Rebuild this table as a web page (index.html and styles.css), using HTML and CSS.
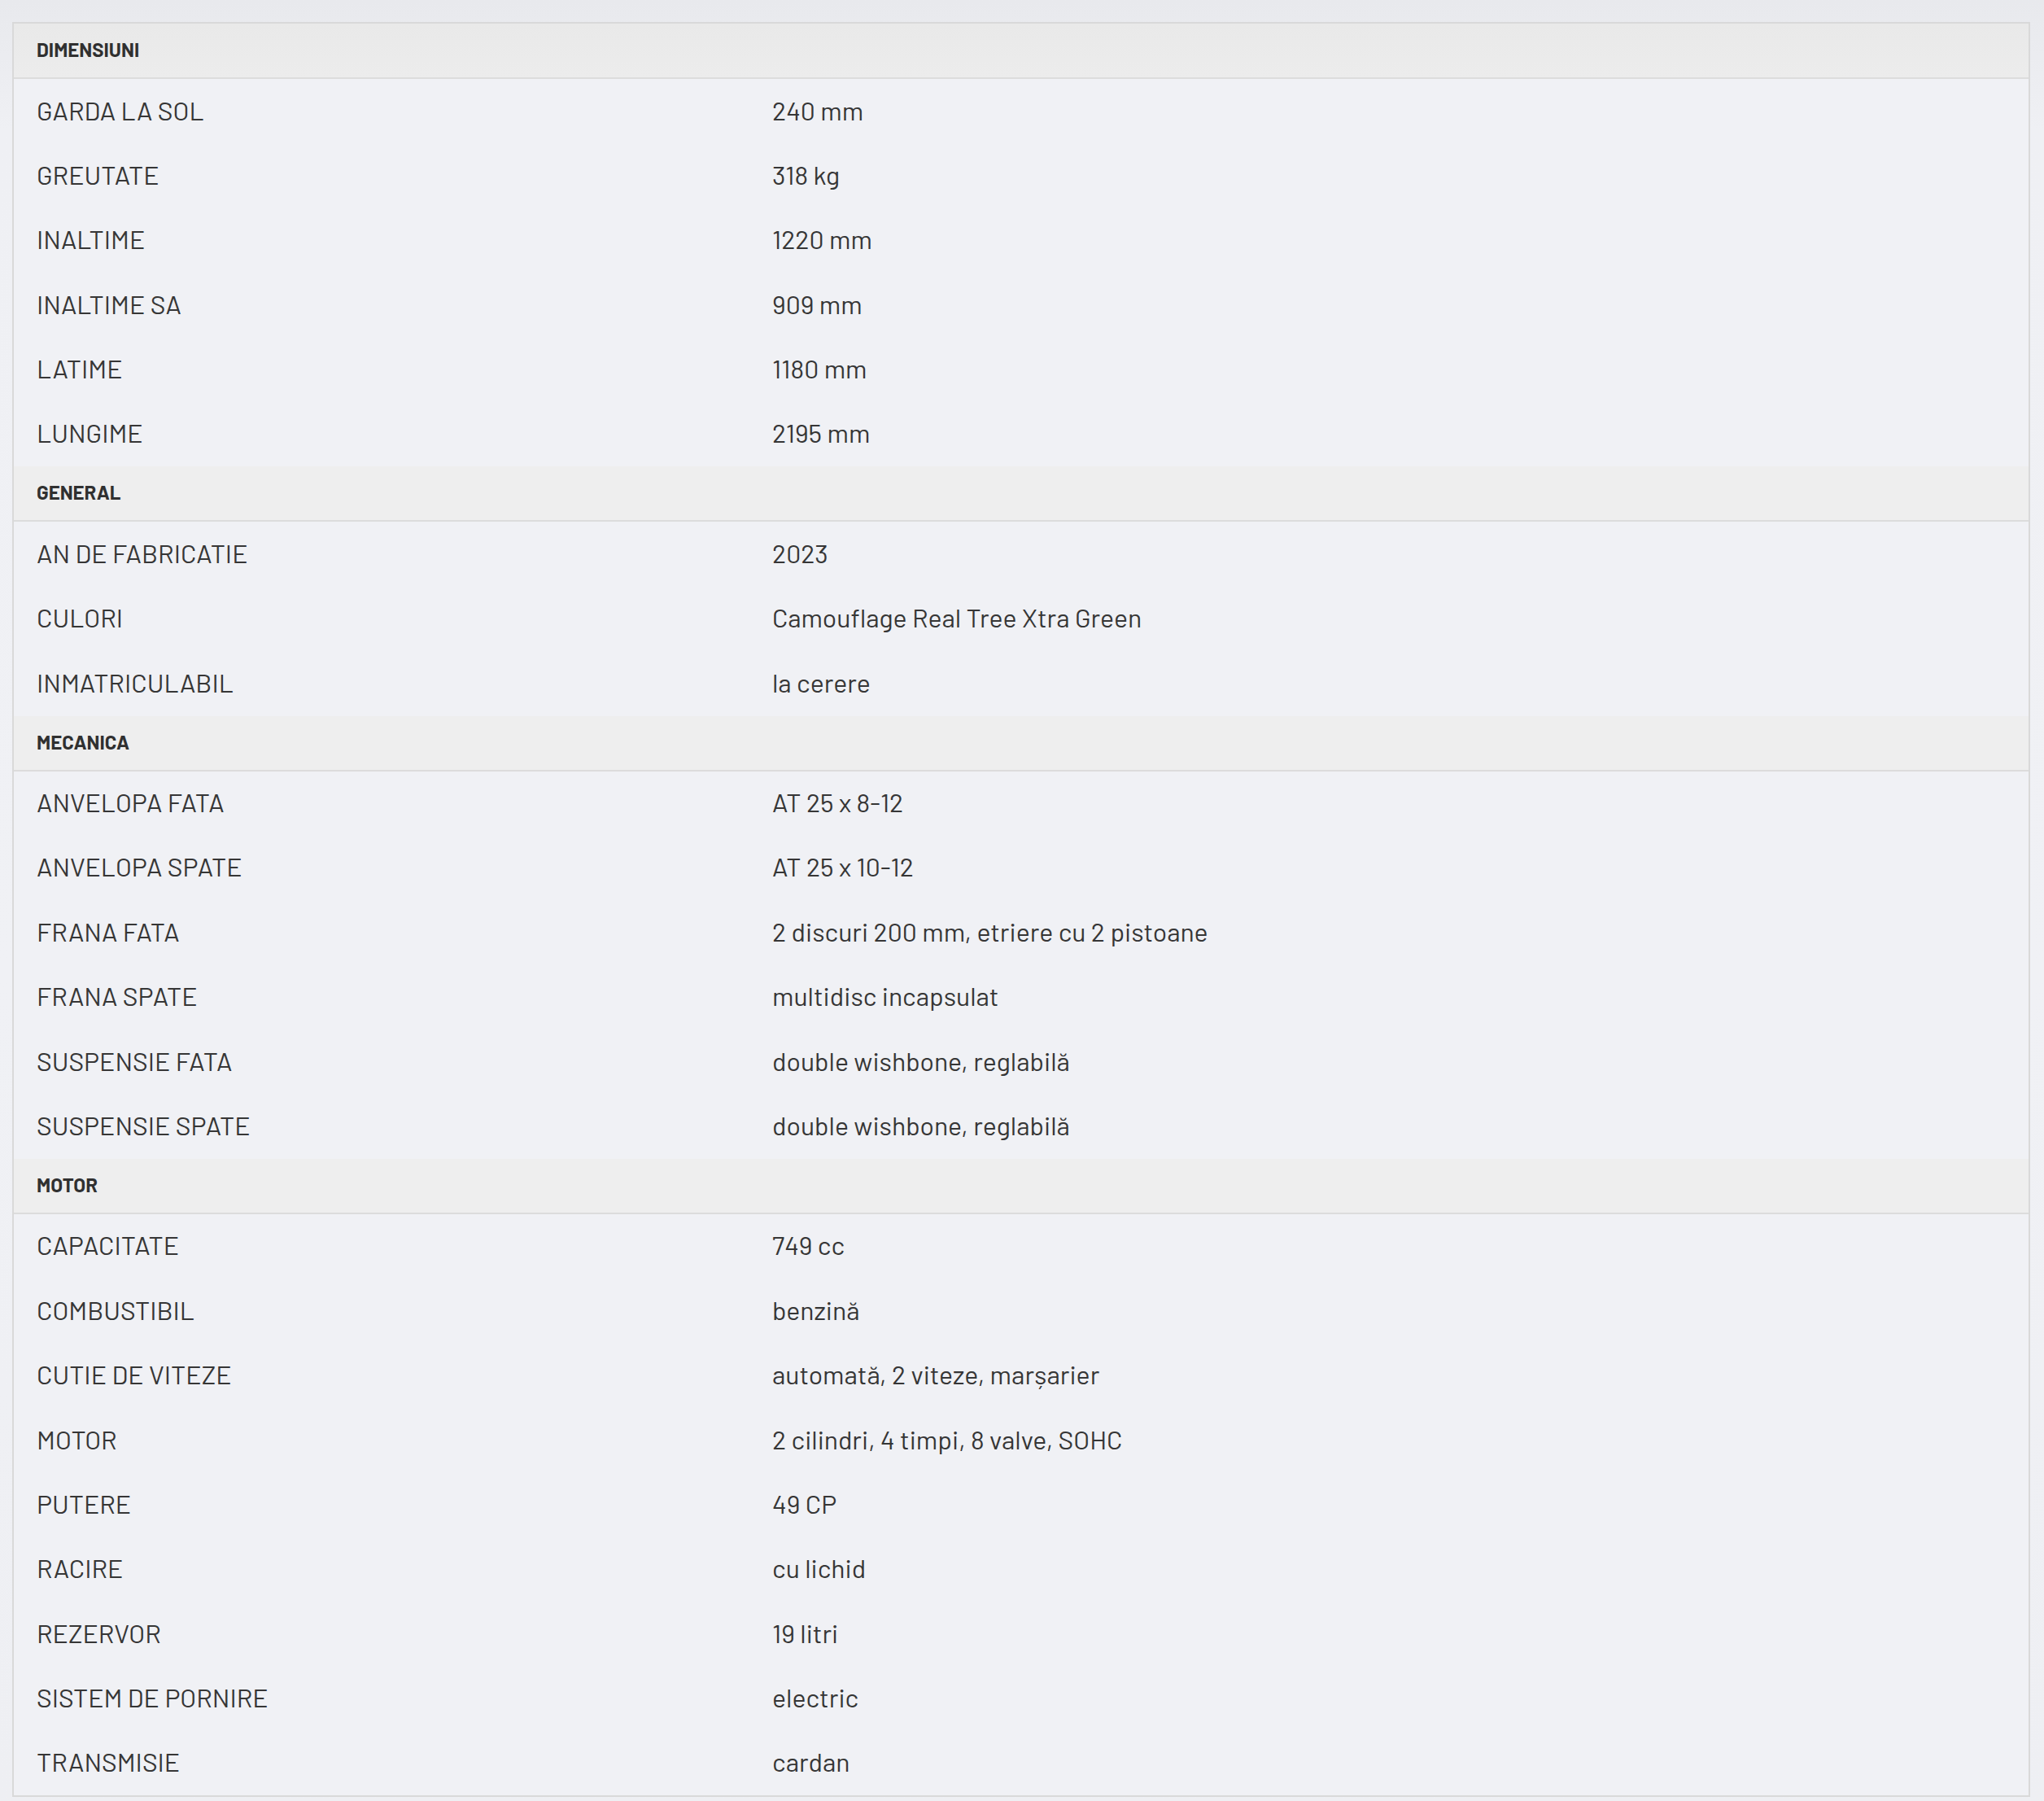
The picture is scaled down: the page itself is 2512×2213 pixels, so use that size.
FILE: index.html
```html
<!DOCTYPE html>
<html lang="ro">
<head>
<meta charset="utf-8">
<title>Specificatii</title>
<link rel="stylesheet" href="styles.css">
</head>
<body>
<div class="page">
  <div class="specs">
    <div class="group-head first">DIMENSIUNI</div>
    <div class="row"><div class="label">GARDA LA SOL</div><div class="value">240 mm</div></div>
    <div class="row"><div class="label">GREUTATE</div><div class="value">318 kg</div></div>
    <div class="row"><div class="label">INALTIME</div><div class="value">1220 mm</div></div>
    <div class="row"><div class="label">INALTIME SA</div><div class="value">909 mm</div></div>
    <div class="row"><div class="label">LATIME</div><div class="value">1180 mm</div></div>
    <div class="row"><div class="label">LUNGIME</div><div class="value">2195 mm</div></div>

    <div class="group-head">GENERAL</div>
    <div class="row"><div class="label">AN DE FABRICATIE</div><div class="value">2023</div></div>
    <div class="row"><div class="label">CULORI</div><div class="value">Camouflage Real Tree Xtra Green</div></div>
    <div class="row"><div class="label">INMATRICULABIL</div><div class="value">la cerere</div></div>

    <div class="group-head">MECANICA</div>
    <div class="row"><div class="label">ANVELOPA FATA</div><div class="value">AT 25 x 8-12</div></div>
    <div class="row"><div class="label">ANVELOPA SPATE</div><div class="value">AT 25 x 10-12</div></div>
    <div class="row"><div class="label">FRANA FATA</div><div class="value">2 discuri 200 mm, etriere cu 2 pistoane</div></div>
    <div class="row"><div class="label">FRANA SPATE</div><div class="value">multidisc incapsulat</div></div>
    <div class="row"><div class="label">SUSPENSIE FATA</div><div class="value">double wishbone, reglabilă</div></div>
    <div class="row"><div class="label">SUSPENSIE SPATE</div><div class="value">double wishbone, reglabilă</div></div>

    <div class="group-head">MOTOR</div>
    <div class="row"><div class="label">CAPACITATE</div><div class="value">749 cc</div></div>
    <div class="row"><div class="label">COMBUSTIBIL</div><div class="value">benzină</div></div>
    <div class="row"><div class="label">CUTIE DE VITEZE</div><div class="value">automată, 2 viteze, marșarier</div></div>
    <div class="row"><div class="label">MOTOR</div><div class="value">2 cilindri, 4 timpi, 8 valve, SOHC</div></div>
    <div class="row"><div class="label">PUTERE</div><div class="value">49 CP</div></div>
    <div class="row"><div class="label">RACIRE</div><div class="value">cu lichid</div></div>
    <div class="row"><div class="label">REZERVOR</div><div class="value">19 litri</div></div>
    <div class="row"><div class="label">SISTEM DE PORNIRE</div><div class="value">electric</div></div>
    <div class="row"><div class="label">TRANSMISIE</div><div class="value">cardan</div></div>
  </div>
</div>
</body>
</html>
```
FILE: styles.css
```css
html, body {
  margin: 0;
  padding: 0;
}
body {
  background: linear-gradient(180deg, #e8e9ed 0px, #eff0f4 160px, #f0f1f5 1200px, #eeeff3 2213px);
  font-family: "Barlow", "Roboto", "Liberation Sans", sans-serif;
  color: #333333;
  min-height: 2213px;
}
.page {
  padding: 27px 17px 0 15px;
}
.specs {
  border: 2px solid #d9d9d9;
  background: #f0f1f5;
  width: 2476px;
}
.group-head {
  box-sizing: border-box;
  height: 68px;
  display: flex;
  align-items: center;
  padding: 0 0 2px 28px;
  background: #eeeeee;
  border-bottom: 2px solid #dcdcdc;
  font-size: 24px;
  font-weight: 700;
  color: #303030;
  line-height: 1;
}
.group-head.first {
  background: linear-gradient(180deg, #e9e9e9, #ececec);
}
.row {
  box-sizing: border-box;
  display: grid;
  grid-template-columns: 904px 1fr;
  height: 79.4px;
  padding-bottom: 4px;
  align-items: center;
  font-size: 32px;
  font-weight: 400;
  line-height: 1.2;
  color: #363636;
}
.label, .value {
  padding-left: 28px;
  white-space: nowrap;
}
```
